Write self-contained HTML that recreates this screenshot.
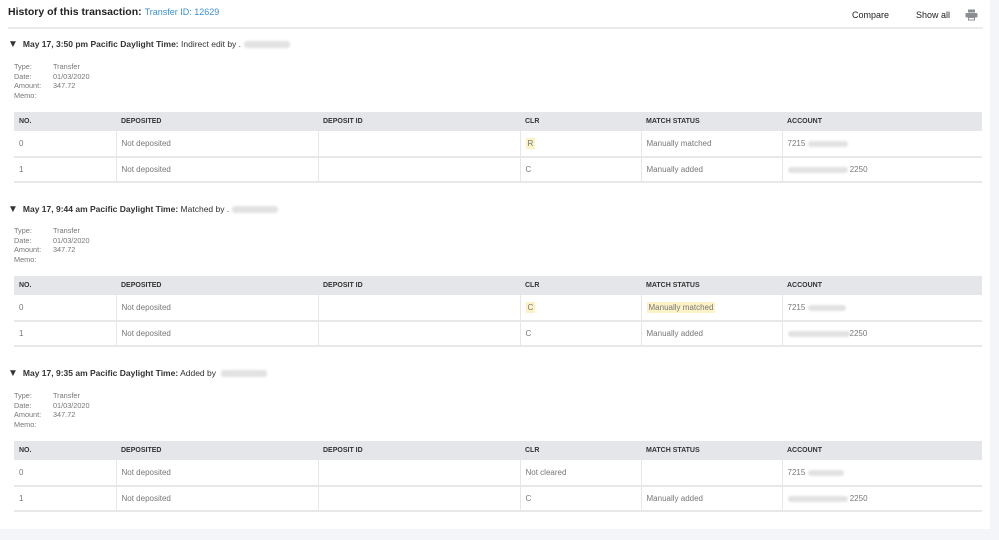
<!DOCTYPE html>
<html><head><meta charset="utf-8"><style>
*{margin:0;padding:0;box-sizing:border-box}
body{width:999px;height:540px;background:#f4f5f8;font-family:"Liberation Sans",sans-serif;position:relative;overflow:hidden;color:#393a3d}
#panel{position:absolute;left:0;top:0;width:990px;height:529px;background:#fff}
.a{position:absolute;white-space:nowrap}
.title{left:8px;top:6px;font-size:10.5px;color:#222}
.title b{font-weight:bold}
.title span{color:#3a8fd6;font-size:9px;margin-left:3px}
.hr{position:absolute;left:8px;width:975px;top:27px;height:2px;background:#ebebeb}
.top{font-size:9px;color:#222;top:10px}
.sh{left:8px;font-size:8.5px;color:#333}
.sh i{font-style:normal;font-size:10px}
.sh b{margin-left:5px}
.sh .blur{display:inline-block;width:46px;height:7px;background:#e2e2e2;border-radius:3px;vertical-align:middle;margin-left:3px;filter:blur(1px)}
.meta{left:14px;font-size:7.3px;color:#777;line-height:9.7px}
.meta div{height:9.7px}
.meta span{display:inline-block;width:39px}
table{position:absolute;left:14px;width:968px;border-collapse:collapse;font-size:8px;color:#777}
th{background:#e4e6ea;height:19px;text-align:left;font-size:7px;color:#333;padding-left:5px;font-weight:bold}
td{height:25.5px;padding-left:5px;border-bottom:2px solid #e8e8e8;border-left:1px solid #e6e6e6}
td:first-child{border-left:none}
.hl{background:#fdf1c6;padding:1px 2px;color:#777}
.bl{display:inline-block;height:6px;background:#e2e2e2;border-radius:3px;vertical-align:middle;filter:blur(1px)}
</style></head><body>
<div id="panel"></div>
<div class="a title"><b>History of this transaction:</b><span>Transfer ID: 12629</span></div>
<div class="a top" style="left:852px">Compare</div>
<div class="a top" style="left:916px">Show all</div>
<svg class="a" style="left:965px;top:9px" width="13" height="12" viewBox="0 0 13 12"><rect x="3" y="0.5" width="7" height="3" fill="#8a8d91"/><rect x="0.5" y="4" width="12" height="4.5" rx="1" fill="#8a8d91"/><rect x="3" y="8" width="7" height="3.5" fill="#8a8d91"/><rect x="4" y="9" width="5" height="1.5" fill="#fff"/></svg>
<div class="hr"></div>

<div class="a sh" style="top:39px"><i>▼</i><b>May 17, 3:50 pm Pacific Daylight Time:</b> Indirect edit by .<span class="blur"></span></div>
<div class="a meta" style="top:62px"><div><span>Type:</span>Transfer</div><div><span>Date:</span>01/03/2020</div><div><span>Amount:</span>347.72</div><div><span>Memo:</span></div></div>
<table style="top:112px"><tr><th style="width:102px">NO.</th><th style="width:202px">DEPOSITED</th><th style="width:202px">DEPOSIT ID</th><th style="width:121px">CLR</th><th style="width:141px">MATCH STATUS</th><th>ACCOUNT</th></tr>
<tr><td>0</td><td>Not deposited</td><td></td><td><span class="hl">R</span></td><td>Manually matched</td><td>7215 <span class="bl" style="width:40px"></span></td></tr>
<tr><td>1</td><td>Not deposited</td><td></td><td>C</td><td>Manually added</td><td><span class="bl" style="width:60px"></span> 2250</td></tr></table>

<div class="a sh" style="top:204px"><i>▼</i><b>May 17, 9:44 am Pacific Daylight Time:</b> Matched by .<span class="blur"></span></div>
<div class="a meta" style="top:226px"><div><span>Type:</span>Transfer</div><div><span>Date:</span>01/03/2020</div><div><span>Amount:</span>347.72</div><div><span>Memo:</span></div></div>
<table style="top:276px"><tr><th style="width:102px">NO.</th><th style="width:202px">DEPOSITED</th><th style="width:202px">DEPOSIT ID</th><th style="width:121px">CLR</th><th style="width:141px">MATCH STATUS</th><th>ACCOUNT</th></tr>
<tr><td>0</td><td>Not deposited</td><td></td><td><span class="hl">C</span></td><td><span class="hl">Manually matched</span></td><td>7215 <span class="bl" style="width:38px"></span></td></tr>
<tr><td>1</td><td>Not deposited</td><td></td><td>C</td><td>Manually added</td><td><span class="bl" style="width:62px"></span>2250</td></tr></table>

<div class="a sh" style="top:368px"><i>▼</i><b>May 17, 9:35 am Pacific Daylight Time:</b> Added by <span class="blur"></span></div>
<div class="a meta" style="top:391px"><div><span>Type:</span>Transfer</div><div><span>Date:</span>01/03/2020</div><div><span>Amount:</span>347.72</div><div><span>Memo:</span></div></div>
<table style="top:441px"><tr><th style="width:102px">NO.</th><th style="width:202px">DEPOSITED</th><th style="width:202px">DEPOSIT ID</th><th style="width:121px">CLR</th><th style="width:141px">MATCH STATUS</th><th>ACCOUNT</th></tr>
<tr><td>0</td><td>Not deposited</td><td></td><td>Not cleared</td><td></td><td>7215 <span class="bl" style="width:36px"></span></td></tr>
<tr><td>1</td><td>Not deposited</td><td></td><td>C</td><td>Manually added</td><td><span class="bl" style="width:60px"></span> 2250</td></tr></table>
</body></html>
